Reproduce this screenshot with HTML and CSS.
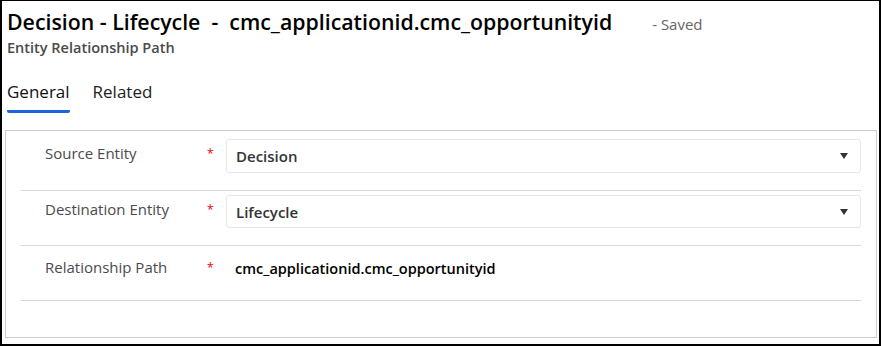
FILE: index.html
```html
<!DOCTYPE html>
<html lang="en">
<head>
    <meta charset="UTF-8">
    <meta name="viewport" content="width=device-width, initial-scale=1.0">
    <title>Decision - Lifecycle - Entity Relationship Path</title>
    <link rel="stylesheet" href="styles.css">
</head>
<body>
    <div class="frame">
        <!-- Record header -->
        <div class="header">
            <div class="title-row">
                <h1 class="title">Decision - Lifecycle &nbsp;-&nbsp; cmc_applicationid.cmc_opportunityid</h1>
                <span class="status">- Saved</span>
            </div>
            <div class="entity-name">Entity Relationship Path</div>
        </div>

        <!-- Tabs -->
        <div class="tabs">
            <div class="tab active">General</div>
            <div class="tab">Related</div>
        </div>

        <!-- Form section -->
        <div class="section">
            <div class="field-row first">
                <div class="label">Source Entity</div>
                <div class="required">*</div>
                <div class="select">
                    <span class="value">Decision</span>
                    <span class="arrow"></span>
                </div>
            </div>
            <div class="field-row">
                <div class="label">Destination Entity</div>
                <div class="required">*</div>
                <div class="select">
                    <span class="value">Lifecycle</span>
                    <span class="arrow"></span>
                </div>
            </div>
            <div class="field-row last">
                <div class="label">Relationship Path</div>
                <div class="required">*</div>
                <div class="text-value">cmc_applicationid.cmc_opportunityid</div>
            </div>
        </div>
    </div>
</body>
</html>
```

FILE: styles.css
```css
* {
    box-sizing: border-box;
    margin: 0;
    padding: 0;
}
body {
    background-color: #fff;
    font-family: 'Open Sans', 'Noto Sans', sans-serif;
    color: #000;
}
.frame {
    width: 881px;
    height: 346px;
    border: 2px solid #000;
    border-top-width: 1px;
    padding: 0 2px 0 3px;
}
.header {
    padding: 7px 0 0 2px;
}
.title-row {
    display: flex;
    align-items: baseline;
    gap: 40px;
}
.title {
    font-size: 21.3px;
    font-weight: 600;
    line-height: 28px;
    color: #000;
    white-space: pre;
}
.status {
    font-size: 15px;
    color: #666;
}
.entity-name {
    font-size: 14.5px;
    font-weight: 600;
    color: #4a4a4a;
    line-height: 18px;
    margin-top: 3px;
}
.tabs {
    display: flex;
    gap: 23px;
    padding: 24px 0 0 2px;
}
.tab {
    font-size: 17px;
    color: #222;
    line-height: 22px;
    padding-bottom: 7px;
    border-bottom: 3px solid transparent;
}
.tab.active {
    color: #111;
    border-bottom-color: #1d63dc;
    border-radius: 0 0 2px 2px;
}
.section {
    margin-top: 17px;
    border: 1px solid #ccc;
    height: 208px;
    padding: 0 15px;
}
.field-row {
    display: flex;
    align-items: flex-start;
    height: 55px;
    border-bottom: 1px solid #d6d6d6;
    padding-top: 4px;
}
.field-row.first {
    height: 60px;
    padding-top: 8px;
}
.label {
    width: 186px;
    padding: 4px 0 0 24px;
    font-size: 15px;
    line-height: 20px;
    color: #4a4a4a;
}
.last .label {
    padding-top: 7px;
}
.required {
    width: 19px;
    padding-top: 5px;
    color: #e00;
    font-size: 12px;
    line-height: 20px;
}
.last .required {
    padding-top: 8px;
}
.select {
    flex: 1;
    display: flex;
    align-items: center;
    justify-content: space-between;
    height: 34px;
    border: 1px solid #e6e6e6;
    border-radius: 3px;
    padding: 0 12px 0 9px;
}
.field-row:nth-child(2) .select {
    height: 33px;
}
.value {
    font-size: 15px;
    font-weight: 600;
    line-height: 20px;
    color: #333;
}
.arrow {
    width: 0;
    height: 0;
    border-left: 4px solid transparent;
    border-right: 4px solid transparent;
    border-top: 6px solid #333;
}
.text-value {
    padding: 9px 0 0 9px;
    font-size: 14.5px;
    font-weight: 600;
    line-height: 20px;
    color: #000;
}
```
